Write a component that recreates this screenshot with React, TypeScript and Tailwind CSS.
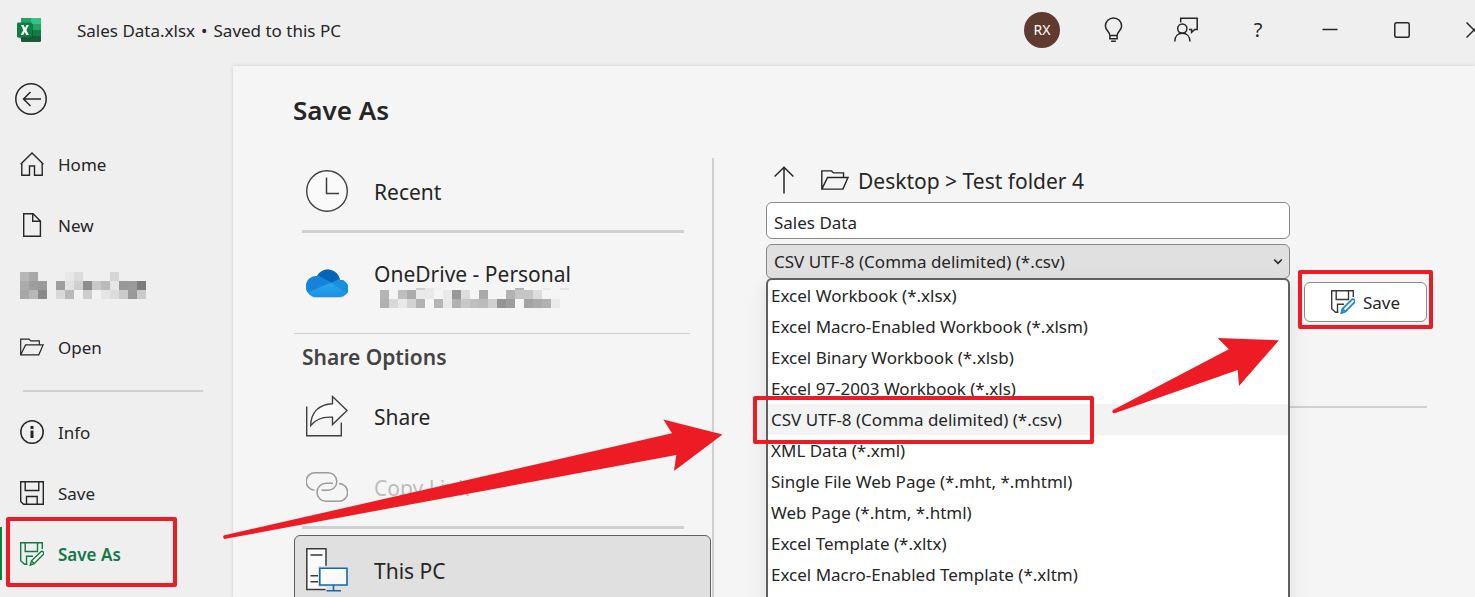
import React from "react";

type IconProps = { className?: string };

function ExcelLogo() {
  return (
    <svg width="26" height="26" viewBox="0 0 26 26" aria-hidden="true">
      <rect x="5" y="1" width="20" height="24" rx="1.2" fill="#185c37" />
      <path d="M5 2.2A1.2 1.2 0 0 1 6.200 1H15v6H5z" fill="#21a366" />
      <path d="M15 1h8.800A1.200 1.200 0 0 1 25 2.200V7H15z" fill="#33c481" />
      <rect x="5" y="7" width="10" height="6" fill="#107c41" />
      <rect x="15" y="7" width="10" height="6" fill="#21a366" />
      <rect x="15" y="13" width="10" height="6" fill="#107c41" />
      <rect x="3" y="6.500" width="14" height="15" rx="1.200" fill="#0b3d24" opacity=".5" />
      <rect x="1" y="5.500" width="15" height="15" rx="1.200" fill="#107c41" />
      <path d="M5 8h2.600l1.400 2.900L10.500 8h2.400l-2.600 5 2.600 5h-2.600l-1.500-3.100L7.200 18H4.600l2.800-5z" fill="#fff" />
    </svg>
  );
}

function BackIcon() {
  return (
    <svg width="32" height="32" viewBox="0 0 32 32" fill="none" stroke="#262626" strokeWidth="1.5" aria-hidden="true">
      <circle cx="16" cy="16" r="15.200" />
      <path d="M26 16H8.500M15.500 9L8.500 16l7 7" />
    </svg>
  );
}

function HomeIcon({ className }: IconProps) {
  return (
    <svg className={className} width="24" height="24" viewBox="0 0 24 24" fill="none" stroke="currentColor" strokeWidth="1.400" aria-hidden="true">
      <path d="M.600 12.200L12 1l11.400 11.200M1.800 11V23.200H9.500V14h5v9.200h7.700V11" />
    </svg>
  );
}

function NewIcon({ className }: IconProps) {
  return (
    <svg className={className} width="24" height="24" viewBox="0 0 24 24" fill="none" stroke="currentColor" strokeWidth="1.400" aria-hidden="true">
      <path d="M3.700.800H13L20.400 8v15.200H3.700zM12.700.800V8.200h7.700" />
    </svg>
  );
}

function FolderIcon({ className, size = 24 }: IconProps & { size?: number }) {
  return (
    <svg className={className} width={size} height={size} viewBox="0 0 24 24" fill="none" stroke="currentColor" strokeWidth="1.200" aria-hidden="true">
      <path d="M.700 19.500V4.200H9l1.700 1.700h8.600v3.900M.700 19.800L5.600 9.900h17.500L18.800 19.800z" />
    </svg>
  );
}

function InfoIcon({ className }: IconProps) {
  return (
    <svg className={className} width="24" height="24" viewBox="0 0 24 24" fill="none" stroke="currentColor" aria-hidden="true">
      <circle cx="12" cy="12" r="11.200" strokeWidth="1.500" />
      <path d="M12 10.500v7.500M12 6v3" strokeWidth="3" />
    </svg>
  );
}

function SaveIcon({ className }: IconProps) {
  return (
    <svg className={className} width="24" height="24" viewBox="0 0 24 24" fill="none" stroke="currentColor" strokeWidth="1.400" aria-hidden="true">
      <path d="M.700.700H23.300V23.300H3.500L.700 20.500zM5.200.700V9.500H18.800V.700M6.500 23.300V15.500H17.200v7.800" />
    </svg>
  );
}

function SaveAsIcon({ className, pencil = "currentColor", pencilWidth = 1.4 }: IconProps & { pencil?: string; pencilWidth?: number }) {
  return (
    <svg className={className} width="24" height="24" viewBox="0 0 24 24" fill="none" stroke="currentColor" strokeWidth="1.400" aria-hidden="true">
      <path d="M22.300 7V.700H.700v18L4.500 22.200H7.500M5.200.700V9.500H17.500V.700M6.500 22.200V14.300h6.500" />
      <path d="M10.200 23.200l1.300-4.400L20.600 9.900a1.800 1.800 0 0 1 2.600 2.700L14.200 21.700zM11.500 18.800l2.700 2.900" stroke={pencil} strokeWidth={pencilWidth} />
    </svg>
  );
}

function BulbIcon() {
  return (
    <svg width="24" height="26" viewBox="0 0 24 26" fill="none" stroke="#262626" strokeWidth="1.500" aria-hidden="true">
      <path d="M7.900 18.500c0-3.700-4.500-4.900-4.500-9.500a8.100 8.100 0 0 1 16.200 0c0 4.600-4.500 5.800-4.500 9.500v3.200H7.900zM7.900 18.600h7.200M9.100 24.300h4.800" />
    </svg>
  );
}

function FeedbackIcon() {
  return (
    <svg width="24" height="26" viewBox="0 0 24 26" fill="none" stroke="#262626" strokeWidth="1.500" aria-hidden="true">
      <path d="M6.700 5.500V1.300H23.200V12.500H20.800L17.600 15.400V12.500H15" />
      <circle cx="8.300" cy="11.600" r="4.600" />
      <path d="M.800 24.500c0-5.200 3.100-8.200 7.500-8.200s7.700 3 7.700 8.200" />
    </svg>
  );
}

function ClockIcon() {
  return (
    <svg width="42" height="42" viewBox="0 0 42 42" aria-hidden="true">
      <circle cx="21" cy="21" r="20.300" fill="#fafafa" stroke="#3f3f3f" strokeWidth="1.400" />
      <path d="M20.500 7.500V23.500H33" fill="none" stroke="#3f3f3f" strokeWidth="1.500" />
    </svg>
  );
}

function OneDriveIcon() {
  return (
    <svg width="42" height="42" viewBox="0 0 42 42" aria-hidden="true">
      <defs>
        <clipPath id="cloud">
          <path d="M10 35A10 10 0 0 1 0 24.500A10.500 10.500 0 0 1 11 13.900A12.300 12.300 0 0 1 34 18A8.500 8.500 0 0 1 34 35z" />
        </clipPath>
        <linearGradient id="cloudBase" x1="0" y1="0" x2="0" y2="1">
          <stop offset="0.400" stopColor="#32b0ec" />
          <stop offset="0.900" stopColor="#168be4" />
        </linearGradient>
      </defs>
      <path d="M4 33.500q3 2.600 6.500 2.600h23q4 0 6-2.600z" fill="#d0d0d0" />
      <g clipPath="url(#cloud)">
        <rect width="42" height="42" fill="url(#cloudBase)" />
        <path d="M8 5h30v14l-12 2-16-8z" fill="#0364b8" />
        <path d="M0 12l11 .800 14 8L0 31z" fill="#1583dc" />
        <path d="M25 20.800L34 16.500 44 15v18.500z" fill="#1490df" />
      </g>
    </svg>
  );
}

function ShareIcon() {
  return (
    <svg width="42" height="42" viewBox="0 0 42 42" fill="none" stroke="#3f3f3f" strokeWidth="1.400" aria-hidden="true">
      <path d="M.700 11.500V40.700H35.300V27.500" />
      <path d="M26.500 1.500L41 15.500 26.500 29.500V22.300C17 21.500 10 24 4.700 30.500 5 18 12 9.300 26.500 8.700z" fill="#fafafa" />
    </svg>
  );
}

function LinkIcon() {
  return (
    <svg width="42" height="42" viewBox="0 0 42 42" fill="none" stroke="#9b9b9b" strokeWidth="1.500" aria-hidden="true">
      <path d="M8.500 24.300A8.800 8.800 0 0 1 9.500 6.700H22a8.800 8.800 0 0 1 0 17.600H15.500" />
      <path d="M27 17.300H20a8.900 8.900 0 0 0 0 18H32.500a8.900 8.900 0 0 0 .5-17.800" />
    </svg>
  );
}

function ComputerIcon() {
  return (
    <svg width="42" height="44" viewBox="0 0 42 44" fill="none" stroke="#3a3a3a" strokeWidth="1.500" aria-hidden="true">
      <path d="M.800.800H20V41.500H.800z" fill="#fafafa" stroke="none" />
      <path d="M19.500 41.500H.800V.800H20v17M4.500 7H16.500M4.500 27.700H12M4.500 33.700H12" />
      <path d="M12 18H42V39H12z" fill="#dfdfdf" stroke="none" />
      <path d="M13.800 20.200H41V37H13.800z" fill="#fafafa" stroke="#1069b4" strokeWidth="1.600" />
      <path d="M27.500 37v5.500M20.500 42.800H35" stroke="#1069b4" strokeWidth="1.600" />
    </svg>
  );
}

function UpIcon() {
  return (
    <svg width="20" height="28" viewBox="0 0 20 28" fill="none" stroke="#262626" strokeWidth="1.500" aria-hidden="true">
      <path d="M10 27.500V1.200M.600 10.500L10 1.200l9.400 9.300" />
    </svg>
  );
}

function Mosaic({ rows, heights, cell = 9 }: { rows: string[]; heights: number[]; cell?: number }) {
  const cols = Math.max(...rows.map((r) => r.split(" ").length));
  const total = heights.reduce((a, b) => a + b, 0);
  return (
    <svg className="block" width={cols * cell} height={total} shapeRendering="crispEdges" aria-hidden="true">
      {rows.map((row, y) =>
        row.split(" ").map((tone, x) =>
          tone === "--" ? null : (
            <rect
              key={`${x}-${y}`}
              x={x * cell}
              y={heights.slice(0, y).reduce((a, b) => a + b, 0)}
              width={cell}
              height={heights[y]}
              fill={`#${tone}${tone}${tone}`}
            />
          ),
        ),
      )}
    </svg>
  );
}

const formats = [
  "Excel Workbook (*.xlsx)",
  "Excel Macro-Enabled Workbook (*.xlsm)",
  "Excel Binary Workbook (*.xlsb)",
  "Excel 97-2003 Workbook (*.xls)",
  "CSV UTF-8 (Comma delimited) (*.csv)",
  "XML Data (*.xml)",
  "Single File Web Page (*.mht, *.mhtml)",
  "Web Page (*.htm, *.html)",
  "Excel Template (*.xltx)",
  "Excel Macro-Enabled Template (*.xltm)",
];
const selectedFormat = formats[4];

function Highlight({ className }: { className: string }) {
  return <span aria-hidden="true" className={`pointer-events-none absolute z-20 rounded-xs border-4 border-[#ed1c24] ${className}`} />;
}

function NavItem({ icon, label }: { icon: React.ReactNode; label: string }) {
  return (
    <button type="button" className="flex h-[61px] w-full items-center gap-[14px] pl-5 text-left">
      {icon}
      <span className="pt-[2px]">{label}</span>
    </button>
  );
}

function Header() {
  return (
    <header className="flex h-[66px] shrink-0 items-center overflow-hidden pb-[6px] pl-4">
      <ExcelLogo />
      <h2 className="ml-[35px] flex gap-[6px] whitespace-nowrap pt-[2px]">
        <span>Sales Data.xlsx</span>
        <span>•</span>
        <span>Saved to this PC</span>
      </h2>
      <div className="-mr-[35px] ml-auto grid grid-cols-[repeat(7,72px)] items-center justify-items-center">
        <button type="button" aria-label="Account" className="size-9 rounded-full bg-[#5f3a2e] text-sm text-white">
          RX
        </button>
        <button type="button" aria-label="Tips">
          <BulbIcon />
        </button>
        <button type="button" aria-label="Feedback">
          <FeedbackIcon />
        </button>
        <button type="button" aria-label="Help" className="text-xl">
          ?
        </button>
        <button type="button" aria-label="Minimize">
          <svg width="16" height="16" viewBox="0 0 16 16" stroke="#262626" strokeWidth="1.500">
            <path d="M.500 7.500h15" />
          </svg>
        </button>
        <button type="button" aria-label="Maximize">
          <svg width="16" height="16" viewBox="0 0 16 16" fill="none" stroke="#262626" strokeWidth="1.500">
            <rect x=".800" y=".800" width="14.400" height="14.400" rx="1.500" />
          </svg>
        </button>
        <button type="button" aria-label="Close">
          <svg width="16" height="16" viewBox="0 0 16 16" stroke="#262626" strokeWidth="1.500">
            <path d="M.500.500l15 15M15.500.500l-15 15" />
          </svg>
        </button>
      </div>
    </header>
  );
}

function Sidebar() {
  return (
    <nav className="w-[233px] shrink-0">
      <button type="button" aria-label="Back" className="ml-[15px] mt-[17px] block">
        <BackIcon />
      </button>
      <div className="mt-[18px]">
        <NavItem icon={<HomeIcon />} label="Home" />
        <NavItem icon={<NewIcon />} label="New" />
        <div className="flex h-[61px] items-center gap-[9px] pl-5">
          <Mosaic rows={["b7 a9 --", "ab 9d 9a", "a7 b7 8a"]} heights={[9, 9, 9]} />
          <Mosaic
            rows={["-- e8 dc -- -- -- d5 -- -- --", "9f e2 cf 8e c8 bb e5 98 9a 7c", "d8 b9 f2 cc f2 e5 dc ca 99 ca"]}
            heights={[9, 9, 9]}
          />
        </div>
        <NavItem icon={<FolderIcon />} label="Open" />
      </div>
      <hr className="ml-[23px] mr-[30px] mt-[13px] border-0 border-t-2 border-[#d0d0d0]" />
      <div className="mt-[9px]">
        <NavItem icon={<InfoIcon />} label="Info" />
        <NavItem icon={<SaveIcon />} label="Save" />
        <div className="relative font-semibold text-[#127a43]">
          <span aria-hidden="true" className="absolute bottom-1 left-0 top-1 w-[2px] bg-[#107c41]" />
          <NavItem icon={<SaveAsIcon />} label="Save As" />
          <Highlight className="-bottom-[3px] -top-[6px] left-[6px] w-[171px]" />
        </div>
      </div>
    </nav>
  );
}

function Place({ icon, children, className = "" }: { icon: React.ReactNode; children: React.ReactNode; className?: string }) {
  return (
    <button type="button" className={`flex w-full shrink-0 items-center gap-[26px] pl-3 text-left text-[21px] leading-7 ${className}`}>
      {icon}
      <span className="pt-[2px]">{children}</span>
    </button>
  );
}

function Places() {
  return (
    <section className="flex w-[420px] shrink-0 flex-col border-r-2 border-[#d0d0d0]">
      <Place icon={<ClockIcon />} className="h-[66px]">
        Recent
      </Place>
      <hr className="ml-2 mr-7 mt-[6px] border-0 border-t-3 border-[#d0d0d0]" />
      <Place icon={<OneDriveIcon />} className="h-[100px]">
        <span className="block">OneDrive - Personal</span>
        <span className="block pl-[6px]">
          <Mosaic
            rows={[
              "-- -- -- -- d0 e9 f1 -- -- -- -- -- -- -- -- b5 -- -- ea -- e4",
              "b5 -- be ac e9 e9 -- e9 98 dc -- aa -- -- b2 c5 c5 dd -- -- --",
              "b1 d8 e9 d3 b3 -- b5 e9 b1 c8 bf bb d0 94 9d -- a3 ab b2 ea --",
            ]}
            heights={[2, 9, 9]}
          />
        </span>
      </Place>
      <hr className="mr-[22px] border-0 border-t border-[#d0d0d0]" />
      <h2 className="pb-[9px] pl-2 pt-[9px] text-[21px] font-semibold leading-7 text-[#444]">Share Options</h2>
      <Place icon={<ShareIcon />} className="h-[71px]">
        Share
      </Place>
      <Place icon={<LinkIcon />} className="h-[71px] text-[#bdbdbd]">
        Copy Link
      </Place>
      <hr className="ml-2 mr-7 mt-1 border-0 border-t-3 border-[#d0d0d0]" />
      <Place icon={<ComputerIcon />} className="mt-[6px] h-[70px] max-w-[417px] rounded-md border border-[#606060] bg-[#e0e0e0] pl-[11px]">
        This PC
      </Place>
    </section>
  );
}

function Destination() {
  return (
    <section className="min-w-0 flex-1 pl-[52px] pr-12">
      <div className="flex h-11 items-center pl-2 text-[21px]">
        <button type="button" aria-label="Up one level">
          <UpIcon />
        </button>
        <FolderIcon size={28} className="ml-[27px]" />
        <a href="#" className="ml-[9px] whitespace-nowrap pt-1">
          Desktop &gt; Test folder 4
        </a>
      </div>
      <div className="flex gap-[14px]">
        <div className="relative min-w-0 flex-1">
          <input
            aria-label="File name"
            defaultValue="Sales Data"
            className="block h-[37px] w-full rounded-md border border-[#8a8a8a] bg-white px-[7px] pt-[3px]"
          />
          <div className="relative mt-[5px]">
            <select
              aria-label="File type"
              defaultValue={selectedFormat}
              className="block h-[35px] w-full appearance-none rounded-md border border-[#8a8a8a] bg-[#e0e0e0] px-[7px]"
            >
              {formats.map((f) => (
                <option key={f}>{f}</option>
              ))}
            </select>
            <svg className="pointer-events-none absolute right-[7px] top-[14px]" width="10" height="7" viewBox="0 0 10 7" fill="none" stroke="#262626" strokeWidth="1.600" aria-hidden="true">
              <path d="M1.200 1.500L5 5.300l3.800-3.800" />
            </svg>
          </div>
          <ul
            role="listbox"
            aria-label="File types"
            className="absolute inset-x-0 top-[76px] z-10 h-[420px] rounded-t-md border-2 border-[#606060] bg-white shadow-[0_6px_18px_rgba(0,0,0,0.1)]"
          >
            {formats.map((f) => (
              <li
                key={f}
                role="option"
                aria-selected={f === selectedFormat}
                className="relative h-[31px] whitespace-nowrap pl-[3px] leading-[31px] aria-selected:bg-[#f3f3f3]"
              >
                {f}
                {f === selectedFormat && <Highlight className="-bottom-[9px] -left-[15px] -top-[8px] w-[341px]" />}
              </li>
            ))}
          </ul>
        </div>
        <div className="relative mt-20 h-10 w-[123px] shrink-0">
          <button type="button" className="flex size-full items-center justify-center gap-2 rounded-md border border-[#8a8a8a] bg-white">
            <SaveAsIcon className="text-[#3a3a3a]" pencil="#1e8bcd" pencilWidth={1.8} />
            <span className="pt-px">Save</span>
          </button>
          <Highlight className="-inset-x-[6px] -bottom-[7px] -top-[12px]" />
        </div>
      </div>
      <hr className="mt-[84px] border-0 border-t-2 border-[#d0d0d0]" />
    </section>
  );
}

function Arrows() {
  return (
    <svg className="pointer-events-none absolute left-0 top-0 z-30" width="1475" height="597" viewBox="0 0 1475 597" fill="#ed1c24" aria-hidden="true">
      <path d="M224.500 535.300L672 433.300 663.300 419.500 722.500 434.500 674 471 676.300 455 225.500 538.800A1.800 1.800 0 0 1 224.500 535.300z" />
      <path d="M1113 410L1228.800 349.300 1217.700 338 1279 340.200 1239 386 1237.700 370 1114.500 413.300A1.900 1.900 0 0 1 1113 410z" />
    </svg>
  );
}

export default function App() {
  return (
    <div className="relative flex h-screen flex-col overflow-hidden bg-[#efefef] font-['Noto_Sans','Open_Sans',sans-serif] text-[17px] text-[#262626]">
      <Header />
      <div className="flex min-h-0 flex-1">
        <Sidebar />
        <main className="flex min-w-0 flex-1 flex-col bg-[#f5f5f5] pl-[60px] shadow-[0_0_4px_rgba(0,0,0,0.14)]">
          <h1 className="pb-7 pt-6 text-[26px] font-semibold leading-10">Save As</h1>
          <div className="flex min-h-0 flex-1 pl-px">
            <Places />
            <Destination />
          </div>
        </main>
      </div>
      <Arrows />
    </div>
  );
}
